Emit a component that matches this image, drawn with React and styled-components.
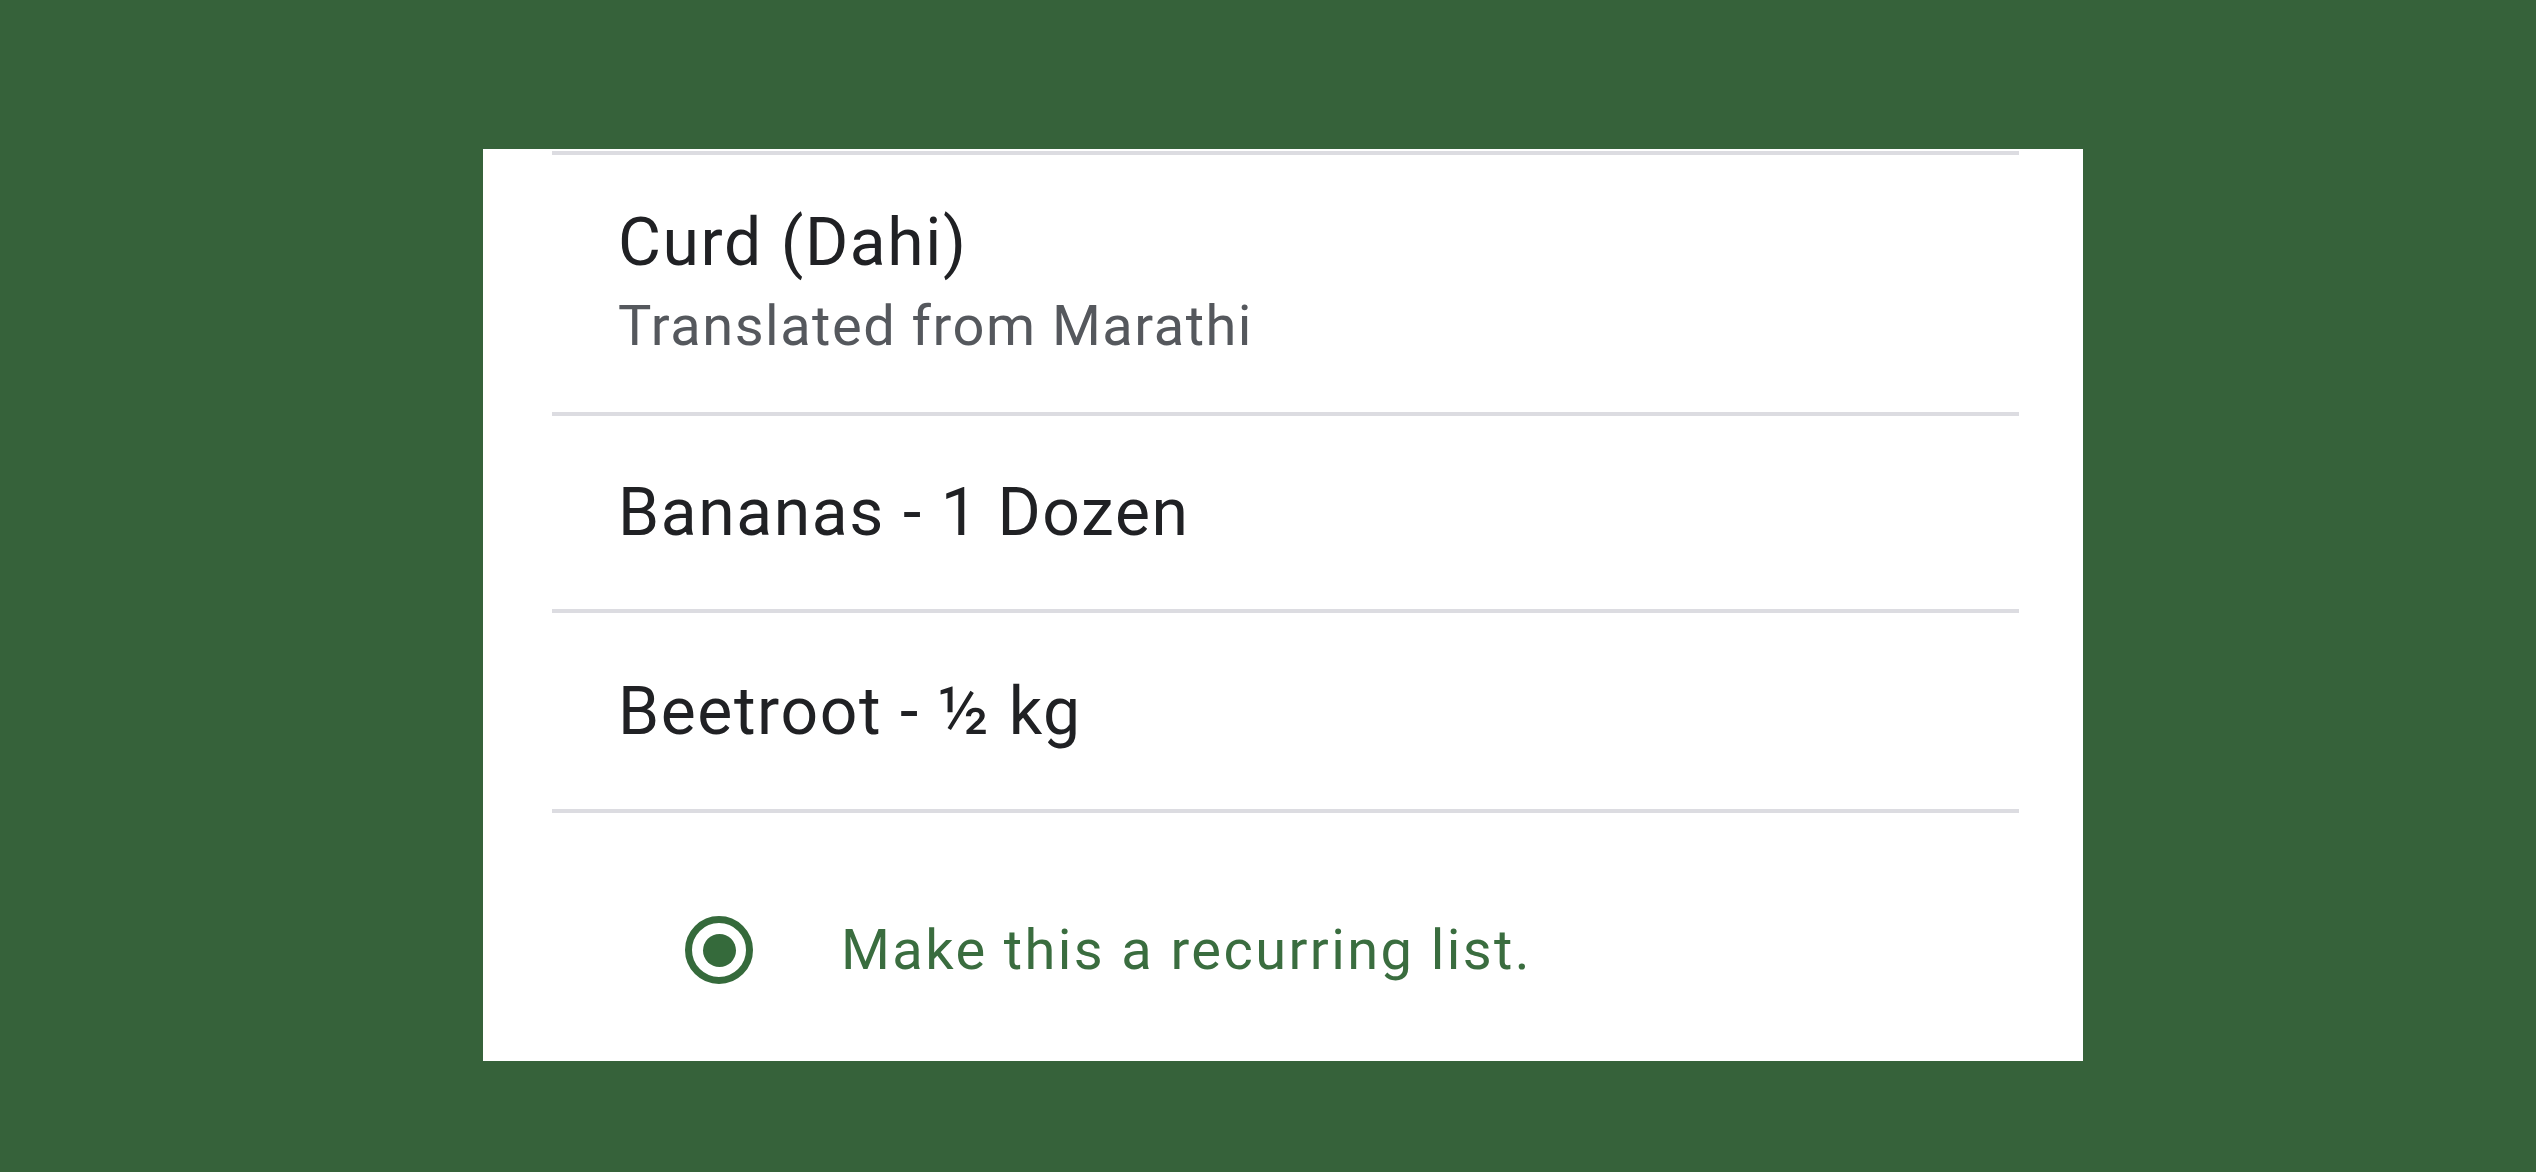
import React from "react";
import styled, { createGlobalStyle } from "styled-components";

const items = [
  { title: "Curd (Dahi)", note: "Translated from Marathi" },
  { title: "Bananas - 1 Dozen" },
  { title: "Beetroot - ½ kg" },
];

const GlobalStyle = createGlobalStyle`
  html, body {
    margin: 0;
    padding: 0;
    background: #36623a;
  }
  body {
    font-family: Roboto, "Liberation Sans", sans-serif;
  }
`;

const App = () => {
  return (
    <Page>
      <GlobalStyle />
      <Card>
        <List>
          {items.map((item, i) => (
            <Row key={item.title} tall={!!item.note} last={i === items.length - 1}>
              <Title>{item.title}</Title>
              {item.note && <Note>{item.note}</Note>}
            </Row>
          ))}
        </List>
        <Footer>
          <Radio>
            <Dot />
          </Radio>
          <FooterText>Make this a recurring list.</FooterText>
        </Footer>
      </Card>
    </Page>
  );
};

const Page = styled.div`
  width: 2536px;
  height: 1172px;
  box-sizing: border-box;
  padding: 149px 0 0 483px;
  background: #36623a;
`;

const Card = styled.div`
  width: 1600px;
  height: 912px;
  box-sizing: border-box;
  padding: 2px 64px 0 69px;
  background: #ffffff;
`;

const List = styled.div`
  border-top: 4px solid #dcdce1;
`;

const Row = styled.div`
  display: flex;
  flex-direction: column;
  padding: ${(p) => (p.tall ? "55px 0 58px" : p.last ? "66px 0 64px" : "64px 0 63px")};
  padding-left: 66px;
  border-bottom: 4px solid #dcdce1;
`;

const Title = styled.div`
  font-size: 66px;
  line-height: 1;
  letter-spacing: 1.6px;
  color: #202124;
`;

const Note = styled.div`
  margin-top: 22px;
  font-size: 56px;
  line-height: 1;
  letter-spacing: 1.5px;
  color: #55585d;
`;

const Footer = styled.div`
  display: flex;
  align-items: center;
  gap: 88px;
  padding: 103px 0 0 133px;
`;

const Radio = styled.div`
  display: flex;
  align-items: center;
  justify-content: center;
  width: 68px;
  height: 68px;
  box-sizing: border-box;
  border: 7px solid #356a3b;
  border-radius: 50%;
`;

const Dot = styled.div`
  width: 33px;
  height: 33px;
  border-radius: 50%;
  background: #356a3b;
`;

const FooterText = styled.div`
  font-size: 56px;
  line-height: 1;
  letter-spacing: 2.4px;
  color: #3a6d3f;
`;

export default App;
